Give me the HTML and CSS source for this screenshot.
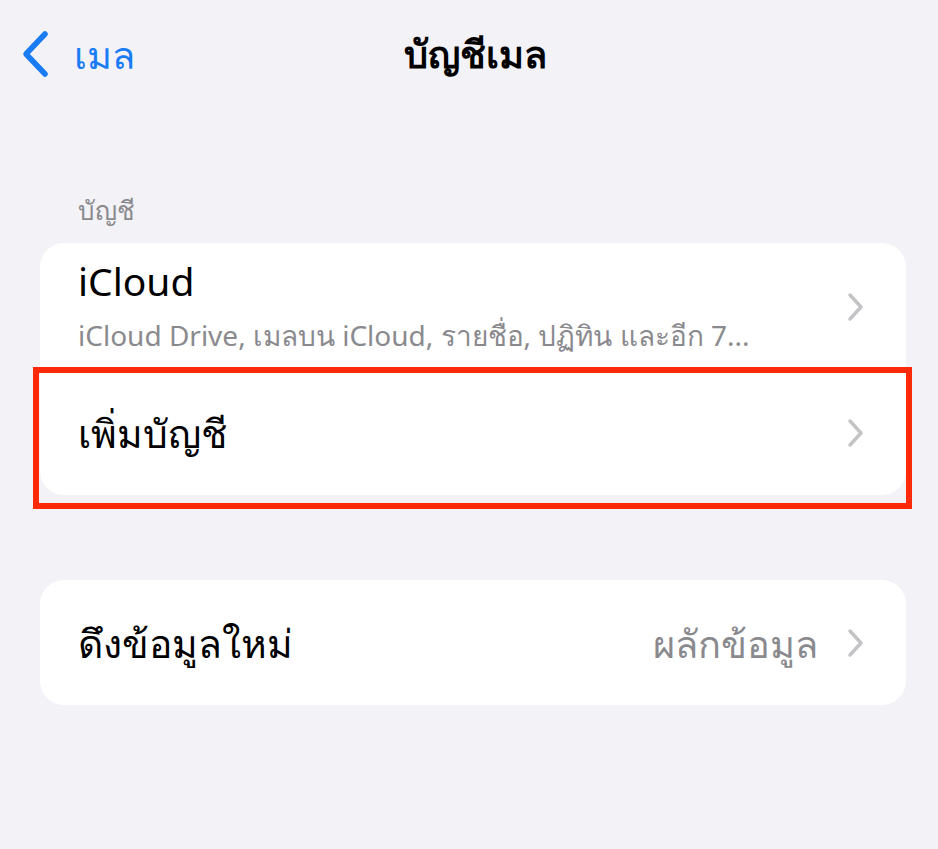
FILE: index.html
```html
<!DOCTYPE html>
<html lang="th">
<head>
<meta charset="utf-8">
<link rel="stylesheet" href="styles.css">
</head>
<body>
<div class="screen">
  <header class="nav">
    <div class="back">
      <svg class="back-icon" width="30" height="48" viewBox="0 0 30 48"><path d="M25 4 L6 24 L25 44" fill="none" stroke="#1a7cf5" stroke-width="5.5" stroke-linecap="round" stroke-linejoin="round"/></svg>
      <span class="back-label">เมล</span>
    </div>
    <h1 class="title">บัญชีเมล</h1>
  </header>

  <div class="section-label">บัญชี</div>
  <div class="card-wrap">
    <div class="card">
      <div class="row row-tall">
        <div class="row-text">
          <div class="row-title">iCloud</div>
          <div class="row-sub">iCloud Drive, เมลบน iCloud, รายชื่อ, ปฏิทิน และอีก 7...</div>
        </div>
        <svg class="chev" width="20" height="30" viewBox="0 0 20 30"><path d="M4 3 L15 15 L4 27" fill="none" stroke="#c4c4c7" stroke-width="3.5" stroke-linecap="round" stroke-linejoin="round"/></svg>
      </div>
      <div class="row row-add">
        <div class="row-title">เพิ่มบัญชี</div>
        <svg class="chev" width="20" height="30" viewBox="0 0 20 30"><path d="M4 3 L15 15 L4 27" fill="none" stroke="#c4c4c7" stroke-width="3.5" stroke-linecap="round" stroke-linejoin="round"/></svg>
      </div>
    </div>
    <div class="highlight"></div>
  </div>

  <div class="card card-fetch">
    <div class="row row-fetch">
      <div class="row-title">ดึงข้อมูลใหม่</div>
      <div class="row-value">ผลักข้อมูล</div>
      <svg class="chev" width="20" height="30" viewBox="0 0 20 30"><path d="M4 3 L15 15 L4 27" fill="none" stroke="#c4c4c7" stroke-width="3.5" stroke-linecap="round" stroke-linejoin="round"/></svg>
    </div>
  </div>
</div>
</body>
</html>
```

FILE: styles.css
```css
html, body {
  margin: 0;
  padding: 0;
  background: #f2f2f7;
}
body {
  font-family: "Noto Sans", "DejaVu Sans", sans-serif;
  color: #000;
  width: 938px;
  height: 849px;
  overflow: hidden;
}
.screen {
  padding: 0 32px 0 40px;
}
.nav {
  position: relative;
  height: 110px;
  display: flex;
  align-items: center;
  justify-content: center;
}
.back {
  position: absolute;
  left: -20px;
  top: 30px;
  display: flex;
  align-items: center;
  gap: 24px;
}
.back-icon {
  display: block;
}
.back-label {
  color: #1a7cf5;
  font-size: 38px;
  line-height: 48px;
}
.title {
  margin: 0;
  font-size: 38px;
  font-weight: 700;
  line-height: 48px;
  margin-top: -4px;
  margin-left: 4px;
}
.section-label {
  margin: 80px 0 0 38px;
  font-size: 26px;
  line-height: 40px;
  color: #8a8a8e;
  height: 53px;
}
.card-wrap {
  position: relative;
}
.card {
  background: #fff;
  border-radius: 24px;
  overflow: hidden;
}
.row {
  display: flex;
  align-items: center;
  padding: 0 40px 0 38px;
}
.row-tall {
  height: 127px;
}
.row-add {
  height: 125px;
}
.row-text {
  flex: 1;
}
.row-title {
  flex: 1;
  font-size: 39px;
  line-height: 48px;
}
.row-tall .row-title {
  margin-top: -4px;
}
.row-sub {
  font-size: 28px;
  line-height: 36px;
  color: #8a8a8e;
  margin-top: 12px;
}
.chev {
  display: block;
  flex: none;
}
.highlight {
  position: absolute;
  left: -7px;
  right: -6px;
  top: 124px;
  bottom: -14px;
  border: 6px solid #ff2a0a;
  pointer-events: none;
}
.card-fetch {
  margin-top: 85px;
}
.row-fetch {
  height: 125px;
}
.row-value {
  font-size: 38px;
  line-height: 48px;
  color: #8a8a8e;
  margin-right: 28px;
}
```
